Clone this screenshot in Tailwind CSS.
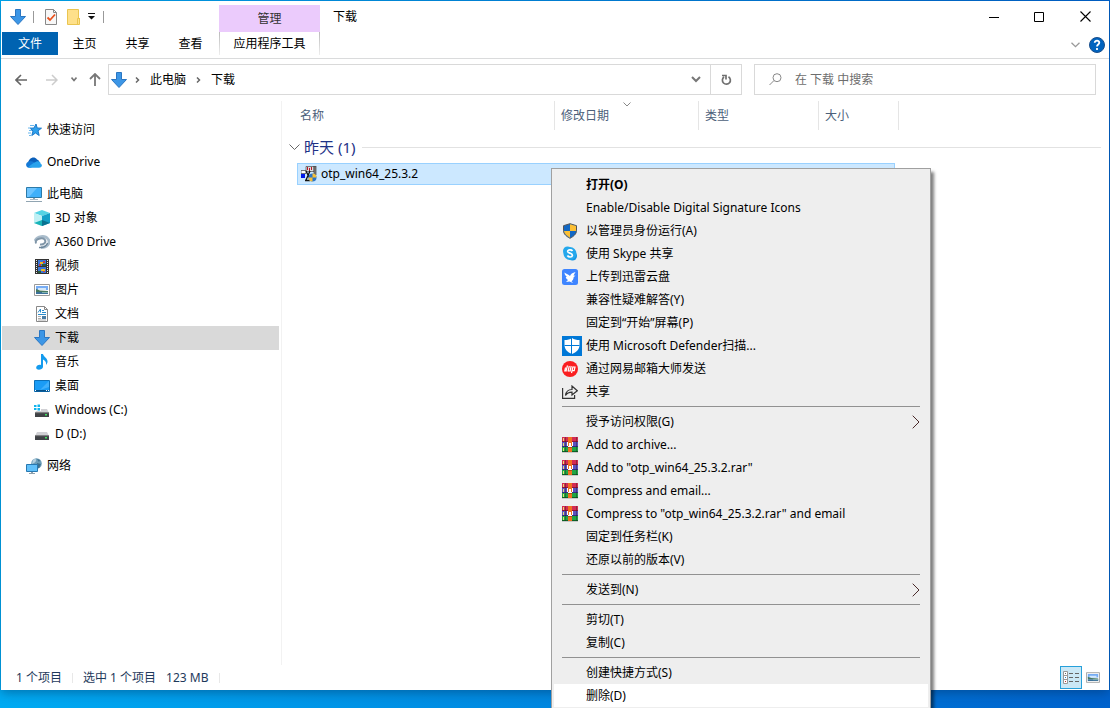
<!DOCTYPE html>
<html lang="zh-CN">
<head>
<meta charset="utf-8">
<title>下载</title>
<script src="https://cdn.jsdelivr.net/npm/@tailwindcss/browser@4"></script>
</head>
<body class="relative h-screen overflow-hidden flex flex-col bg-linear-to-r from-[#00aaf2] to-[#0062cc] p-px pb-[18px] font-['Noto_Sans','Noto_Sans_CJK_SC',sans-serif] text-xs text-black">

<svg class="hidden" aria-hidden="true">
  <symbol id="down" viewBox="0 0 16 16"><path d="M5.5.5h5v7h5L8 15.500.5 7.500h5z" fill="#3c96e6" stroke="#2a76c2"/></symbol>
  <symbol id="rar" viewBox="0 0 16 16"><g shape-rendering="crispEdges">
    <path fill="#d42a52" d="M0 0h16v5H0z"/><path fill="#8e1438" d="M0 4h16v1H0z"/>
    <path fill="#5b50c0" d="M0 5h16v5H0z"/><path fill="#342c80" d="M0 9h16v1H0z"/>
    <path fill="#1fa544" d="M0 10h16v5H0z"/><path fill="#0c6426" d="M0 14h16v1H0z"/>
    <path fill="#e8e070" d="M1 1h1v3H1zM1 6h1v3H1zM1 11h1v3H1z"/><path fill="#222" opacity=".4" d="M3 0h1v15H3zM14 0h1v15h-1z"/>
    <path fill="#f07020" d="M6 0h4v15H6z"/><path fill="#b44a10" d="M6 10h4v1H6z"/>
    <path fill="#c8c8c8" d="M0 15h16v1H0z"/>
    <path d="M5 5h1v4h1V6h2v3h1V5h1v4h-1v1H6V9H5z" fill="#fff"/></g></symbol>
  <symbol id="photo" viewBox="0 0 16 12"><path fill="#fff" stroke="#9a9a9a" d="M.5.5h15v11H.5z"/><path fill="#76acf4" d="M2 2h12v4H2z"/><path fill="#d4e8fa" d="M4 4h8v2H4z"/><path fill="#47785f" d="M2 5l4 1.500 8 .5v1H2z"/><path fill="#3c719a" d="M2 8h12v2H2z"/><path fill="#84b4b0" d="M8 8h6v1H8z"/></symbol>
  <symbol id="drive" viewBox="0 0 14 8"><path fill="#d0d0d4" d="M2 0h10l2 4H0z"/><path fill="#404246" d="M0 3.500h14V8H0z"/><path fill="#777" d="M0 3.500h14v.7H0z"/><path fill="#40e060" d="M10 5h2v1.500h-2z"/></symbol>
  <symbol id="chev" viewBox="0 0 8 14"><path d="M.7.700 7 7 .7 13.300" fill="none" stroke="currentColor"/></symbol>
</svg>

<div class="flex min-h-0 flex-1 flex-col bg-white shadow-[0_3px_10px_rgba(0,40,80,0.4)]">
  <!-- Title bar and ribbon tabs -->
  <header class="flex h-[58px] shrink-0 border-b border-[#dadbdc]">
    <div class="flex w-[218px] shrink-0 flex-col">
      <div class="flex h-[31px] items-center pl-[9px]">
        <svg class="size-4"><use href="#down"/></svg>
        <span class="ml-[7px] h-3 w-px bg-[#999]"></span>
        <button class="ml-[11px]" aria-label="属性"><svg width="12" height="16" viewBox="0 0 12 16"><path d="M.5.5h8l3 3v12H.5z" fill="#f7f7f7" stroke="#888"/><path d="M8.500.5v3h3" fill="none" stroke="#888"/><path d="M2.500 8.500l2.500 2.500 5-5.500" fill="none" stroke="#e8501c" stroke-width="1.800"/></svg></button>
        <button class="ml-[10px]" aria-label="新建文件夹"><svg width="13" height="16" viewBox="0 0 13 16"><path d="M.5.5h11v9h1v6H.5z" fill="#fee08a" stroke="#eac550"/><path d="M10.500 15V9.500H13" fill="none" stroke="#eac550"/></svg></button>
        <button class="ml-2" aria-label="自定义快速访问工具栏"><svg width="7" height="7" viewBox="0 0 7 7"><path d="M0 0h7v1H0zM0 3h7L3.500 6.500z" fill="#111"/></svg></button>
        <span class="ml-2 h-3 w-px bg-[#999]"></span>
      </div>
      <nav class="flex h-[23px] pl-px">
        <button class="w-14 bg-[#0063b1] pt-px text-white">文件</button>
        <button class="w-[53px] pt-px">主页</button>
        <button class="w-[53px] pt-px">共享</button>
        <button class="w-[53px] pt-px">查看</button>
      </nav>
    </div>
    <div class="flex w-[101px] shrink-0 flex-col pt-1">
      <div class="flex h-[27px] items-center justify-center bg-[#ebcbfc] text-[#333]">管理</div>
      <div class="flex h-[23px] justify-between">
        <span class="w-px bg-linear-to-b from-[#bbb] to-[#eee]"></span>
        <button class="pt-px">应用程序工具</button>
        <span class="w-px bg-linear-to-b from-[#bbb] to-[#eee]"></span>
      </div>
    </div>
    <h1 class="pt-2 pl-[13px]">下载</h1>
    <div class="ml-auto flex flex-col">
      <div class="flex h-[31px] items-center">
        <button class="flex w-[45px] justify-center" aria-label="最小化"><svg width="10" height="10"><path d="M0 5h10v1H0z"/></svg></button>
        <button class="flex w-[45px] justify-center" aria-label="最大化"><svg width="10" height="10"><path d="M.5.5h9v9h-9z" fill="none" stroke="#000"/></svg></button>
        <button class="flex w-12 justify-center" aria-label="关闭"><svg width="11" height="11"><path d="M.5.5l10 10M10.500.5l-10 10" fill="none" stroke="#000" stroke-width="1.100"/></svg></button>
      </div>
      <div class="flex h-[26px] items-center justify-end gap-[9px] pr-1">
        <button aria-label="展开功能区"><svg width="9" height="6"><path d="M.5.700l4 4 4-4" fill="none" stroke="#999" stroke-width="1.300"/></svg></button>
        <button aria-label="帮助"><svg width="16" height="16" viewBox="0 0 16 16"><circle cx="8" cy="8" r="7.500" fill="#0063bf" stroke="#1a4f8c"/><path d="M5.700 5.800C5.700 2.900 10.400 3 10.300 5.800 10.200 7.500 8 7.500 8 9.500M8 11v2" fill="none" stroke="#fff" stroke-width="1.800"/></svg></button>
      </div>
    </div>
  </header>

  <!-- Address bar -->
  <div class="flex shrink-0 items-center pt-[5px] pr-[13px] pb-1.5">
    <div class="flex w-[107px] shrink-0 items-center pl-3.5">
      <button aria-label="返回"><svg width="13" height="12"><path d="M6 1L1 6l5 5M1 6h11" fill="none" stroke="#666" stroke-width="1.600"/></svg></button>
      <button class="ml-[17px]" aria-label="前进"><svg width="13" height="12"><path d="M7 1l5 5-5 5M12 6H1" fill="none" stroke="#ccc" stroke-width="1.500"/></svg></button>
      <button class="ml-[13px]" aria-label="最近位置"><svg width="6" height="5"><path d="M.5.500L3 3.500l2.500-3" fill="none" stroke="#777" stroke-width="1.600"/></svg></button>
      <button class="ml-3" aria-label="上移"><svg width="12" height="13"><path d="M1 6l5-5 5 5M6 1v12" fill="none" stroke="#777" stroke-width="1.800"/></svg></button>
    </div>
    <div class="flex h-[31px] min-w-0 flex-[632] border border-[#d9d9d9]">
      <div class="flex flex-1 items-center pl-0.5">
        <svg class="size-4"><use href="#down"/></svg>
        <svg class="ml-2 text-[#666]" width="5" height="6" viewBox="0 0 5 6"><path d="M1 .500L3.500 3 1 5.500" fill="none" stroke="currentColor" stroke-width="1.500"/></svg>
        <button class="ml-2.5">此电脑</button>
        <svg class="ml-2.5 text-[#666]" width="5" height="6" viewBox="0 0 5 6"><path d="M1 .500L3.500 3 1 5.500" fill="none" stroke="currentColor" stroke-width="1.500"/></svg>
        <button class="ml-2.5">下载</button>
      </div>
      <button class="flex w-[29px] items-center justify-center border-r border-[#d9d9d9]" aria-label="以前的位置"><svg width="10" height="7"><path d="M1 1l4 4 4-4" fill="none" stroke="#777" stroke-width="2"/></svg></button>
      <button class="flex w-[30px] items-center justify-center" aria-label="刷新"><svg width="11" height="12" viewBox="0 0 11 12"><path d="M7.500 2.800a4 4 0 1 1-4.500.2M1 1.500h4v4" fill="none" stroke="#707070" stroke-width="1.700"/></svg></button>
    </div>
    <label class="ml-3 flex h-[31px] min-w-0 flex-[326] items-center border border-[#d9d9d9] pl-3.5">
      <svg width="13" height="13"><circle cx="8" cy="4.700" r="4" fill="none" stroke="#888"/><path d="M5 7.500L.5 12" stroke="#888"/></svg>
      <input class="ml-[13px] min-w-0 flex-1 outline-none placeholder:text-[#6d6d6d]" type="search" aria-label="搜索" placeholder="在 下载 中搜索">
    </label>
  </div>

  <div class="flex min-h-0 flex-1">
    <!-- Navigation pane -->
    <aside class="w-[281px] shrink-0 border-r border-[#f2f2f2] pt-[17px] pr-0.5 pl-px">
      <ul class="flex flex-col">
        <li class="mb-2"><a href="#" class="flex h-6 items-center gap-[5px] pl-6"><svg width="16" height="16" viewBox="0 0 16 16"><path d="M10 2l1.200 4 4.300.2-3.500 2.600 1.200 4.700-3.700-2.500L5.800 13.500 7 9 4 6.200l4-.2z" fill="#2ea0ec" stroke="#1b78c8"/><path d="M4 3.500h4M2 6h3M3 8.500h3M2 11h3M3 13.500h2" stroke="#6ab8ee"/></svg>快速访问</a></li>
        <li class="mb-2"><a href="#" class="flex h-6 items-center gap-[5px] pl-6"><svg width="16" height="11" viewBox="0 0 16 11"><path d="M2 6C3 1 8-1.500 11 2.500c2 .5 2.500 2 2 4L7 9z" fill="#0a5fba"/><path d="M3 10.800C-1 10.500-.8 5 3.200 4.500 6 3.500 8 5 10 6.500L5 10.800z" fill="#1479d6"/><path d="M3 10.800C1 10.500 7 6 11 4.300c3-.3 3.500 1.500 3.500 2.200C17 8 16 10.800 13 10.800z" fill="#28a2ec"/></svg>OneDrive</a></li>
        <li><a href="#" class="flex h-6 items-center gap-[5px] pl-6"><svg width="16" height="15" viewBox="0 0 16 15"><path fill="#3fb0fa" stroke="#2c7aa8" d="M.5.5h15v10H.5z"/><path fill="#6cc4ff" d="M1 1h10L3 10H1z"/><path fill="#91a5b2" d="M7 11h2v1H7zM4 12h8v.7H4zM0 14h16v1H0z"/></svg>此电脑</a></li>
        <li><a href="#" class="flex h-6 items-center gap-[5px] pl-8"><svg width="16" height="16" viewBox="0 0 16 16"><path fill="#55d4e4" d="M0 3l8-3 8 3-8 3z"/><path fill="#c0f0f4" d="M0 3l8 3v10l-8-3z"/><path fill="#14a0c8" d="M16 3L8 6v10l8-3z"/><path fill="#18b4b8" d="M0 13l8-3v6z"/><path fill="#0a7290" d="M8 10l8 3-8 3z"/></svg>3D 对象</a></li>
        <li><a href="#" class="flex h-6 items-center gap-[5px] pl-8"><svg width="16" height="14" viewBox="0 0 16 14"><path d="M1 6C3 1 11 0 14 4s-1 8.500-7 8.500" fill="none" stroke="#a9bccb" stroke-width="2.800"/><path d="M2 8.500c-2-5 7-6.500 9-3.500 1.500 3-2 5-5 4.500" fill="none" stroke="#8096a8" stroke-width="2"/><path d="M5 12.500c4 .5 8-1.500 8.500-4.500" fill="none" stroke="#6b8498" stroke-width="1.500"/></svg>A360 Drive</a></li>
        <li><a href="#" class="flex h-6 items-center gap-1.5 pl-[33px]"><svg width="14" height="15" viewBox="0 0 14 15"><path fill="#333" d="M0 0h14v15H0z"/><path d="M1.500 1v14M12.500 1v14" stroke="#eee" stroke-dasharray="1 1"/><path fill="#3a75d8" d="M3 1h8v6H3zM3 8h8v6H3z"/><path fill="#e8bd20" d="M5 3h3v2H5zM6 10h4v2H6z"/><path fill="#c03848" d="M8 2h2v2H8zM4 5h2v2H4zM8 12h2v1H8z"/><path fill="#275c3c" d="M7 5h4v2H7zM3 12h3v2H3z"/></svg>视频</a></li>
        <li><a href="#" class="flex h-6 items-center gap-[5px] pl-8"><svg width="16" height="12"><use href="#photo"/></svg>图片</a></li>
        <li><a href="#" class="flex h-6 items-center gap-[7px] pl-[34px]"><svg width="12" height="16" viewBox="0 0 12 16"><path d="M.5.5h8l3 3v12H.5z" fill="#fff" stroke="#888"/><path d="M8.500.5v3h3" fill="none" stroke="#888"/><path d="M2 6.500L4.500 3v3.500M6 4.500h2M2 8.500h8M6 6.500h4" fill="none" stroke="#2b8ccc"/><path d="M2 10.500h3M2 12.500h3M2 14h8" stroke="#999" stroke-width=".8"/><path fill="#487ca4" d="M6 10h4v3H6z"/></svg>文档</a></li>
        <li><a href="#" aria-current="page" class="flex h-6 items-center gap-[5px] bg-[#d9d9d9] pl-8"><svg class="size-4"><use href="#down"/></svg>下载</a></li>
        <li><a href="#" class="flex h-6 items-center gap-[7px] pl-[34px]"><svg width="12" height="16" viewBox="0 0 12 16"><path fill="#149bee" d="M5 0h2c.5 3 5 4 4.500 8-.2 1.500-1 2.300-1.500 3 .5-3-1-4.500-3-5.500V13c-.5 3-6.500 4-6.800.8C0 11.500 3 10.200 5 11z"/></svg>音乐</a></li>
        <li><a href="#" class="flex h-6 items-center gap-[5px] pl-8"><svg width="16" height="12" viewBox="0 0 16 12"><path fill="#1a9cf6" stroke="#0d70b8" d="M.5.5h15v11H.5z"/><path fill="#40b0fc" d="M15 1v6L6 10z"/><path fill="#075088" d="M1 10h14v1.500H1z"/><path fill="#fff" d="M1 10h1v1H1zM12 10h1v1h-1zM14 10h1v1h-1z"/></svg>桌面</a></li>
        <li><a href="#" class="flex h-6 items-center gap-1.5 pl-8"><svg width="15" height="13" viewBox="0 0 15 13"><svg x="1" y="5" width="14" height="8"><use href="#drive"/></svg><path fill="#fff" d="M0 0h7v7H0z"/><path fill="#10b4ee" d="M0 1h2.500v2H0zM3.500.5H6V3H3.500zM0 4h2.500v2H0zM3.500 4H6v2.500H3.500z"/></svg>Windows (C:)</a></li>
        <li class="mb-2"><a href="#" class="flex h-6 items-center gap-1.5 pl-[33px]"><svg width="14" height="12" viewBox="0 0 14 12"><svg y="4" width="14" height="8"><use href="#drive"/></svg></svg>D (D:)</a></li>
        <li><a href="#" class="flex h-6 items-center gap-[5px] pl-6"><svg width="16" height="16" viewBox="0 0 16 16"><circle cx="10.500" cy="5.500" r="5.300" fill="#6c9db8"/><path fill="#b4d0e0" d="M7 2c2-2 4-1 3 1S7 5 6 6z"/><path fill="#3d708e" d="M11 5l4 1-2 4h-2zM11 1l3 1-1 2z"/><path fill="#60c0fa" stroke="#2878b0" d="M.5 6.500h11v7H.5z"/><path fill="#8ea0ac" d="M5 14h2v1H5zM3 15h6v1H3z"/></svg>网络</a></li>
      </ul>
    </aside>

    <!-- File list -->
    <main class="flex min-w-0 flex-1 flex-col">
      <div class="relative flex h-[29px] shrink-0 text-[#4c607a]">
        <button class="w-[273px] border-r border-[#e5e5e5] pl-[18px] text-left">名称</button>
        <button class="w-36 border-r border-[#e5e5e5] pl-1.5 text-left">修改日期</button>
        <button class="w-[120px] border-r border-[#e5e5e5] pl-1.5 text-left">类型</button>
        <button class="w-20 border-r border-[#e5e5e5] pl-1.5 text-left">大小</button>
        <svg class="absolute top-px left-[341px]" width="8" height="5"><path d="M.5.500L4 4l3.500-3.500" fill="none" stroke="#888"/></svg>
      </div>
      <button class="mt-[5px] flex h-6 items-center pl-[7px] text-[15px] leading-6 text-[#1e3287]"><svg width="11" height="7"><path d="M.5.500l5 5 5-5" fill="none" stroke="#666"/></svg><span class="ml-1">昨天 (1)</span><span class="mr-2 ml-[7px] h-px flex-1 bg-[#e2e2e2]"></span></button>
      <button class="mt-1 ml-[15px] flex h-[22px] w-[598px] items-center border border-[#99d1ff] bg-[#cce8ff] pl-[3px] text-left">
        <svg width="16" height="16" viewBox="0 0 16 16"><path fill="#ddd" stroke="#333" stroke-width=".6" d="M5 .5h8v5H5z"/><path fill="#b81828" d="M6 1h1v3H6zM8 2h1v3H8zM10 1h1v3h-1z"/><path fill="#888" stroke="#222" stroke-width=".6" d="M13 0h2v9h-2z"/><path fill="#fff" stroke="#222" stroke-width=".6" d="M0 4.500h5v3H0z"/><path fill="#0018e8" d="M0 8h4v4H0z"/><path stroke="#111" stroke-width="1.300" fill="none" d="M5 5l4 8M9 5l-4 9M4 14.500h5"/><circle cx="11.500" cy="11.500" r="4" fill="#2a74c8"/><path fill="#f4bf38" d="M11.500 7.500a4 4 0 0 1 4 4h-4zM11.500 11.500v4a4 4 0 0 1-4-4z"/></svg>
        <span class="ml-1">otp_win64_25.3.2</span>
      </button>
    </main>
  </div>

  <!-- Status bar -->
  <footer class="flex h-[25px] shrink-0 items-center pl-[15px] text-[#1e395b]">
    <span>1 个项目</span><span class="ml-2.5 h-2.5 w-px bg-[#e8e8e8]"></span>
    <span class="ml-2.5">选中 1 个项目</span><span class="ml-2.5">123 MB</span><span class="ml-2.5 h-2.5 w-px bg-[#e8e8e8]"></span>
    <button class="ml-auto flex h-[23px] w-[22px] items-center justify-center border border-[#26a0da] bg-[#cbe8f6]" aria-label="详细信息"><svg width="17" height="13" viewBox="0 0 17 13"><path fill="#fff" stroke="#999" d="M.5.5h4v12h-4zM.5 4.500h4M.5 8.500h4"/><path stroke="#666" d="M6 2.500h4M12 2.500h4M6 6.500h4M12 6.500h4M6 10.500h4M12 10.500h4"/><path fill="#2684c8" d="M2 6h1v1H2z"/><path fill="#c03030" d="M2 10h1v1H2z"/><path fill="#666" d="M2 2h1v1H2z"/></svg></button>
    <button class="mr-[9px] ml-1" aria-label="大缩略图"><svg width="14" height="11"><use href="#photo"/></svg></button>
  </footer>
</div>

<!-- Context menu -->
<ul role="menu" class="absolute top-[168px] left-[551px] w-[380px] border border-[#a0a0a0] bg-[#eeeeee] px-0.5 py-1 shadow-[3px_4px_3px_rgba(0,0,0,0.5)]">
  <li><button role="menuitem" class="flex h-[23px] w-full items-center pl-8 font-bold">打开(O)</button></li>
  <li><button role="menuitem" class="flex h-[23px] w-full items-center pl-8">Enable/Disable Digital Signature Icons</button></li>
  <li><button role="menuitem" class="flex h-[23px] w-full items-center gap-2 pl-2"><svg width="16" height="16" viewBox="0 0 16 16"><path fill="#1268c4" stroke="#555" d="M8 .7l6.500 2v4.800c0 3.500-3 6-6.500 7.800-3.500-1.800-6.500-4.300-6.500-7.800V2.700z"/><path fill="#fcbf34" d="M8 1.300l6 1.800V8H8zM8 8v6.700C5 13 2.300 11 2 8z"/></svg>以管理员身份运行(A)</button></li>
  <li><button role="menuitem" class="flex h-[23px] w-full items-center gap-2 pl-2"><svg width="16" height="16" viewBox="0 0 16 16"><circle cx="5.500" cy="5" r="4.500" fill="#25a8ec"/><circle cx="10.500" cy="10" r="4.500" fill="#1696e4"/><circle cx="8" cy="7.500" r="6.500" fill="#25a8ec"/><path d="M10.500 5C9.500 3.500 5.500 3.500 5.700 5.700 6 7.500 10.500 6.800 10.400 9.300 10.200 11.500 6.500 11.500 5.400 9.500" fill="none" stroke="#fff" stroke-width="1.700"/></svg>使用 Skype 共享</button></li>
  <li><button role="menuitem" class="flex h-[23px] w-full items-center gap-2 pl-2"><svg width="16" height="16" viewBox="0 0 16 16"><rect width="16" height="16" rx="2.500" fill="#3f85ff"/><path fill="#fff" d="M2.500 3.500c2 1.500 4 2 5.500 3.500.5-2 2.500-3.200 5.500-4L11.500 6.500l2 .3-1.800 1.200c-.2 2.200-1 3.500-2.200 4.200l1.500 1.800-3.500-1.500-3.500.5 2-2C4.500 10 3.800 9 3.800 8l1.200-.2C3.500 7 2.500 5.500 2.500 3.500z"/></svg>上传到迅雷云盘</button></li>
  <li><button role="menuitem" class="flex h-[23px] w-full items-center pl-8">兼容性疑难解答(Y)</button></li>
  <li><button role="menuitem" class="flex h-[23px] w-full items-center pl-8">固定到“开始”屏幕(P)</button></li>
  <li><button role="menuitem" class="flex h-[23px] w-full items-center gap-1 pl-2"><svg width="20" height="20" viewBox="0 0 20 20"><path fill="#0078d7" d="M0 0h20v20H0z"/><path fill="#fff" d="M10 2c2 1.500 4.500 2 7.500 2v5c0 4.500-3 7-7.500 9-4.500-2-7.500-4.500-7.500-9V4c3 0 5.500-.5 7.500-2z"/><path d="M9.500 2v16M2.500 9.500h15" stroke="#0078d7"/></svg>使用 Microsoft Defender扫描...</button></li>
  <li><button role="menuitem" class="flex h-[23px] w-full items-center gap-2 pl-2"><svg width="16" height="16" viewBox="0 0 16 16"><circle cx="8" cy="8" r="8" fill="#fa1e20"/><path d="M5.500 4.500L4 10M3.500 6.500L2.800 10h2M7.300 5L6 10.500M9.200 5L8 10.500M6.500 10h2M11 5.500L9.500 12M11 6h2l-.8 3.700H10" fill="none" stroke="#fff" stroke-width="1.200"/></svg>通过网易邮箱大师发送</button></li>
  <li><button role="menuitem" class="flex h-[23px] w-full items-center gap-2 pl-2"><svg width="16" height="14" viewBox="0 0 16 14"><path d="M.6 3v10.300h12V10M3.500 10.500C4 6.500 6.500 4.500 10 4.500V1l5.300 4.700L10 10V7.200c-3 0-5 .8-6.500 3.300z" fill="none" stroke="#333" stroke-width="1.200"/></svg>共享</button></li>
  <li role="separator" class="mx-2 my-[3px] h-px bg-[#919191]"></li>
  <li><button role="menuitem" class="flex h-[23px] w-full items-center justify-between pr-2 pl-8">授予访问权限(G)<svg class="text-[#4a2a2a]" width="8" height="14"><use href="#chev"/></svg></button></li>
  <li><button role="menuitem" class="flex h-[23px] w-full items-center gap-2 pl-2"><svg class="size-4"><use href="#rar"/></svg>Add to archive...</button></li>
  <li><button role="menuitem" class="flex h-[23px] w-full items-center gap-2 pl-2"><svg class="size-4"><use href="#rar"/></svg>Add to "otp_win64_25.3.2.rar"</button></li>
  <li><button role="menuitem" class="flex h-[23px] w-full items-center gap-2 pl-2"><svg class="size-4"><use href="#rar"/></svg>Compress and email...</button></li>
  <li><button role="menuitem" class="flex h-[23px] w-full items-center gap-2 pl-2"><svg class="size-4"><use href="#rar"/></svg>Compress to "otp_win64_25.3.2.rar" and email</button></li>
  <li><button role="menuitem" class="flex h-[23px] w-full items-center pl-8">固定到任务栏(K)</button></li>
  <li><button role="menuitem" class="flex h-[23px] w-full items-center pl-8">还原以前的版本(V)</button></li>
  <li role="separator" class="mx-2 my-[3px] h-px bg-[#919191]"></li>
  <li><button role="menuitem" class="flex h-[23px] w-full items-center justify-between pr-2 pl-8">发送到(N)<svg class="text-[#4a2a2a]" width="8" height="14"><use href="#chev"/></svg></button></li>
  <li role="separator" class="mx-2 my-[3px] h-px bg-[#919191]"></li>
  <li><button role="menuitem" class="flex h-[23px] w-full items-center pl-8">剪切(T)</button></li>
  <li><button role="menuitem" class="flex h-[23px] w-full items-center pl-8">复制(C)</button></li>
  <li role="separator" class="mx-2 my-[3px] h-px bg-[#919191]"></li>
  <li><button role="menuitem" class="flex h-[23px] w-full items-center pl-8">创建快捷方式(S)</button></li>
  <li><button role="menuitem" class="flex h-[23px] w-full items-center bg-white pl-8">删除(D)</button></li>
</ul>
</body>
</html>
